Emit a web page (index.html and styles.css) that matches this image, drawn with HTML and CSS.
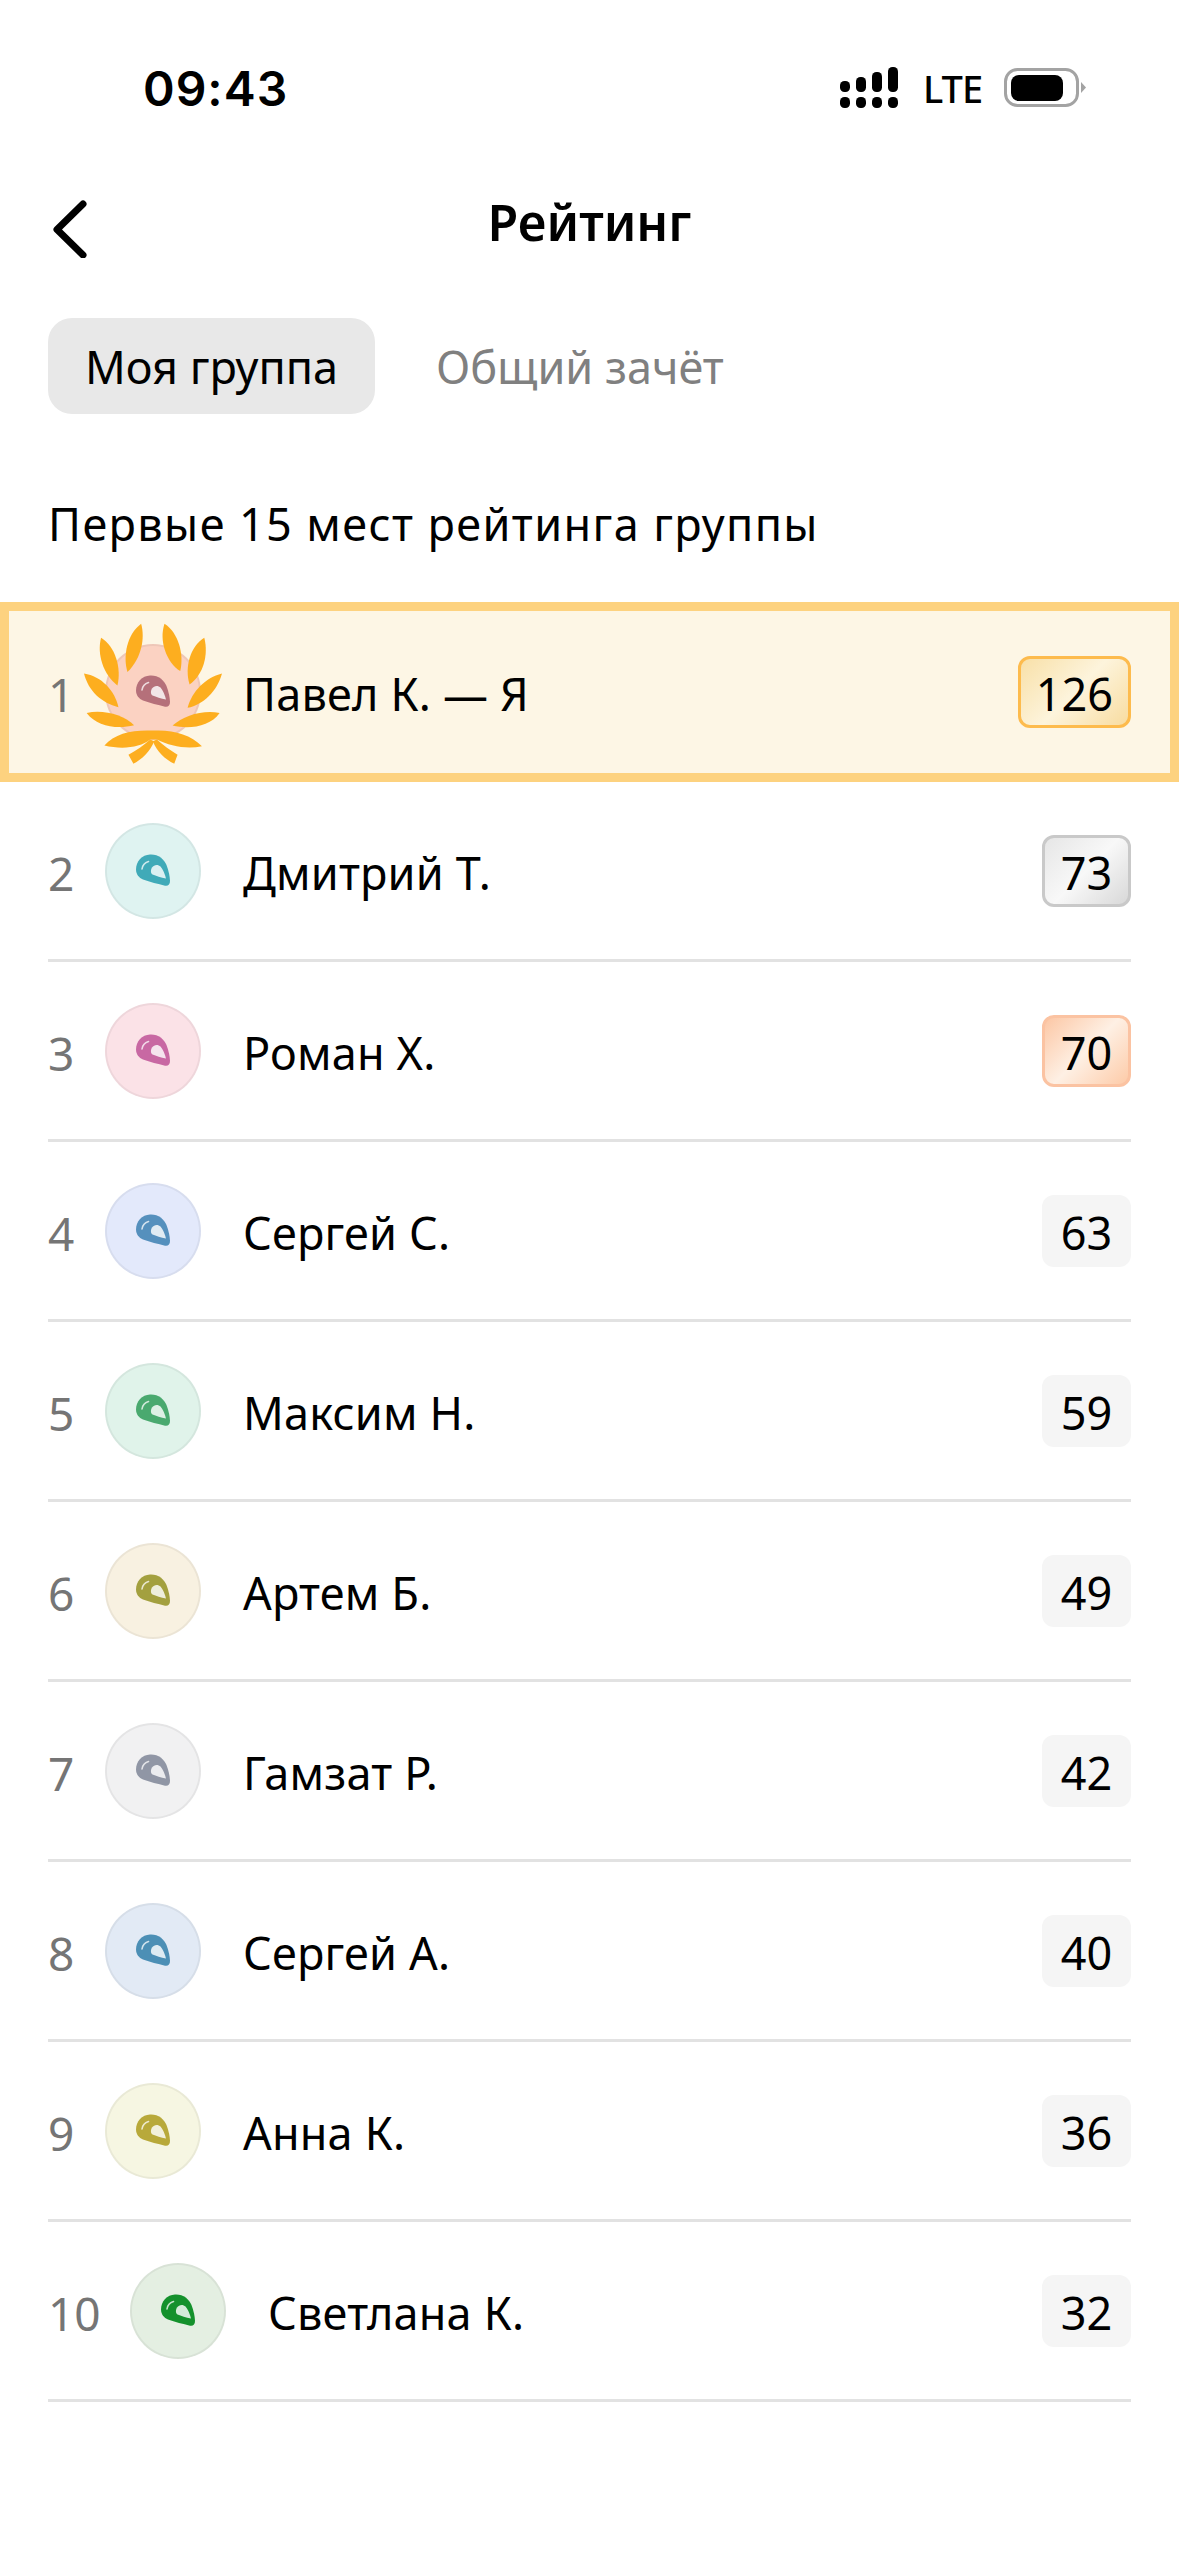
FILE: index.html
```html
<!DOCTYPE html>
<html lang="ru">
<head>
  <meta charset="UTF-8">
  <title>Рейтинг</title>
  <link rel="stylesheet" href="styles.css">
</head>
<body>
  <svg class="sprite" width="0" height="0">
    <symbol id="helmet" viewBox="0 0 34 32">
      <path fill="currentColor" d="M14 0.500C22 0 28 5 30.500 11C32.500 16 33.800 22 34 27C34 30.500 32 32.300 29 31.700C22 30 14 28 7 25.500C3 24 0 20 0 15.500C0 7 6 1 14 0.500Z"/>
      <path fill="#fff" fill-opacity="0.82" d="M16 13.500C18 10.500 22 10 24.500 12.500C27 15.500 29 20 30 24.500C25 23.500 20 22 16.500 20.500C14.500 19.500 14.500 16 16 13.500Z"/>
      <path fill="none" stroke="#fff" stroke-opacity="0.75" stroke-width="1.600" stroke-linecap="round" d="M6 15C6.500 11.500 9 8.500 12.500 7.500"/>
    </symbol>
  </svg>

  <div class="statusBar">
    <span class="clock">09:43</span>
    <div class="statusIcons">
      <svg class="signal" width="60" height="42" viewBox="0 0 60 42">
        <rect x="0" y="14" width="10" height="11" rx="4.500"/>
        <rect x="16" y="10" width="10" height="15" rx="4.500"/>
        <rect x="32" y="5" width="10" height="20" rx="4.500"/>
        <rect x="48" y="0" width="10" height="25" rx="4.500"/>
        <rect x="0" y="30" width="10" height="11" rx="4.500"/>
        <rect x="16" y="30" width="10" height="11" rx="4.500"/>
        <rect x="32" y="30" width="10" height="11" rx="4.500"/>
        <rect x="48" y="30" width="10" height="11" rx="4.500"/>
      </svg>
      <span class="network">LTE</span>
      <svg class="battery" width="82" height="40" viewBox="0 0 82 40">
        <rect x="1.500" y="1.500" width="72" height="36" rx="12" fill="none" stroke="#a3a3a3" stroke-width="3"/>
        <rect x="7" y="7" width="52" height="26" rx="8"/>
        <path fill="#a3a3a3" d="M77 14L82 19.500L77 25Z"/>
      </svg>
    </div>
  </div>

  <header class="navBar">
    <svg class="backIcon" width="40" height="60" viewBox="0 0 40 60">
      <path d="M33 6L7 31.500L33 57" fill="none" stroke="#000" stroke-width="7" stroke-linecap="round" stroke-linejoin="round"/>
    </svg>
    <h1 class="navTitle">Рейтинг</h1>
  </header>

  <div class="tabs">
    <div class="tab tabActive">Моя группа</div>
    <div class="tab">Общий зачёт</div>
  </div>

  <p class="caption">Первые 15 мест рейтинга группы</p>

  <div class="ratingList">
    <div class="ratingRow rowMe">
      <span class="place">1</span>
      <div class="avatar" style="--bg:#fbd2c2;--fg:#b5707a">
        <svg class="helmet" width="34" height="32"><use href="#helmet"/></svg>
        <!-- traced from the reference, 3x coords -->
        <svg class="wreath" width="147" height="147" viewBox="240 90 440 440">
          <g fill="#fdae1f">
            <path d="M423 98C435 140 425 200 382 243C368 195 380 130 423 98Z"/>
            <path d="M493 98C535 125 552 190 540 240C500 215 475 150 493 98Z"/>
            <path d="M303 140C345 165 365 230 352 283C310 250 290 190 303 140Z"/>
            <path d="M612 140C625 190 610 250 568 280C552 230 570 165 612 140Z"/>
            <path d="M252 247C305 255 345 300 355 348C305 335 265 300 252 247Z"/>
            <path d="M665 247C650 300 610 340 562 350C575 300 615 260 665 247Z"/>
            <path d="M260 365C310 355 370 370 402 402C350 415 290 405 260 365Z"/>
            <path d="M658 365C610 355 550 372 517 403C570 415 630 405 658 365Z"/>
            <path d="M313 463C345 425 400 415 460 418C520 415 570 430 605 465C560 475 510 465 470 445L450 445C420 470 365 475 313 463Z"/>
            <path d="M385 490C410 478 430 462 450 445L462 450C450 480 425 505 400 517Z"/>
            <path d="M532 490C510 478 490 462 470 445L458 450C470 480 495 505 522 517Z"/>
          </g>
        </svg>
      </div>
      <span class="name">Павел К. — Я</span>
      <span class="score scoreGold">126</span>
    </div>
    <div class="ratingRow">
      <span class="place">2</span>
      <div class="avatar" style="--bg:#dff3f1;--fg:#40aab8"><svg class="helmet" width="34" height="32"><use href="#helmet"/></svg></div>
      <span class="name">Дмитрий Т.</span>
      <span class="score scoreSilver">73</span>
    </div>
    <div class="ratingRow">
      <span class="place">3</span>
      <div class="avatar" style="--bg:#fbe2e7;--fg:#c868a3"><svg class="helmet" width="34" height="32"><use href="#helmet"/></svg></div>
      <span class="name">Роман Х.</span>
      <span class="score scoreBronze">70</span>
    </div>
    <div class="ratingRow">
      <span class="place">4</span>
      <div class="avatar" style="--bg:#e3e9fb;--fg:#5590bd"><svg class="helmet" width="34" height="32"><use href="#helmet"/></svg></div>
      <span class="name">Сергей С.</span>
      <span class="score">63</span>
    </div>
    <div class="ratingRow">
      <span class="place">5</span>
      <div class="avatar" style="--bg:#e0f3ea;--fg:#4aa96f"><svg class="helmet" width="34" height="32"><use href="#helmet"/></svg></div>
      <span class="name">Максим Н.</span>
      <span class="score">59</span>
    </div>
    <div class="ratingRow">
      <span class="place">6</span>
      <div class="avatar" style="--bg:#f8f1e1;--fg:#a3a03f"><svg class="helmet" width="34" height="32"><use href="#helmet"/></svg></div>
      <span class="name">Артем Б.</span>
      <span class="score">49</span>
    </div>
    <div class="ratingRow">
      <span class="place">7</span>
      <div class="avatar" style="--bg:#f1f1f2;--fg:#9096a5"><svg class="helmet" width="34" height="32"><use href="#helmet"/></svg></div>
      <span class="name">Гамзат Р.</span>
      <span class="score">42</span>
    </div>
    <div class="ratingRow">
      <span class="place">8</span>
      <div class="avatar" style="--bg:#e2eaf5;--fg:#4c8fb5"><svg class="helmet" width="34" height="32"><use href="#helmet"/></svg></div>
      <span class="name">Сергей А.</span>
      <span class="score">40</span>
    </div>
    <div class="ratingRow">
      <span class="place">9</span>
      <div class="avatar" style="--bg:#f6f6e2;--fg:#b8a93a"><svg class="helmet" width="34" height="32"><use href="#helmet"/></svg></div>
      <span class="name">Анна К.</span>
      <span class="score">36</span>
    </div>
    <div class="ratingRow rowWide">
      <span class="place">10</span>
      <div class="avatar" style="--bg:#e4efe2;--fg:#14912c"><svg class="helmet" width="34" height="32"><use href="#helmet"/></svg></div>
      <span class="name">Светлана К.</span>
      <span class="score">32</span>
    </div>
  </div>
</body>
</html>
```

FILE: styles.css
```css
* {
  box-sizing: border-box;
}
body {
  margin: 0;
  background: #fff;
  color: #000;
  font-family: "Noto Sans", "Open Sans", sans-serif;
}
.sprite {
  display: block;
}

/* status bar */
.statusBar {
  height: 172px;
  padding: 60px 93px 0 143px;
  display: flex;
  justify-content: space-between;
  align-items: flex-start;
}
.clock {
  margin-top: 1px;
  font-family: Inter, sans-serif;
  font-size: 48px;
  font-weight: 600;
  line-height: 56px;
  letter-spacing: 1px;
}
.statusIcons {
  display: flex;
  align-items: center;
  height: 56px;
  gap: 23px;
}
.network {
  width: 58px;
  font-size: 38px;
  font-weight: 500;
  line-height: 40px;
  letter-spacing: -1px;
  white-space: nowrap;
}

/* nav */
.navBar {
  position: relative;
  height: 100px;
  display: flex;
  align-items: center;
  justify-content: center;
}
.backIcon {
  position: absolute;
  left: 50px;
  top: 26px;
}
.navTitle {
  margin: 0;
  font-size: 50px;
  font-weight: 600;
  line-height: 60px;
}

/* tabs */
.tabs {
  display: flex;
  gap: 24px;
  padding: 46px 48px 0;
}
.tab {
  height: 96px;
  padding: 0 37px;
  border-radius: 24px;
  font-size: 45px;
  line-height: 98px;
  color: #808080;
}
.tabActive {
  background: #e8e8e8;
  color: #000;
}

.caption {
  margin: 0;
  padding: 81px 48px 0;
  height: 188px;
  font-size: 45px;
  line-height: 58px;
  letter-spacing: 1.4px;
}

/* list */
.ratingRow {
  height: 180px;
  margin: 0 48px;
  display: flex;
  align-items: center;
  border-bottom: 3px solid #e2e2e2;
}
.rowMe {
  position: relative;
  margin: 0;
  padding: 0 39px;
  background: #fdf6e5;
  border: 9px solid #fdd27f;
}
.place {
  width: 57px;
  flex: none;
  padding-top: 4px;
  font-size: 46px;
  color: #757575;
}
.rowWide .place {
  width: 82px;
}
.avatar {
  position: relative;
  flex: none;
  width: 96px;
  height: 96px;
  border-radius: 50%;
  background: var(--bg);
  color: var(--fg);
  box-shadow: inset 0 0 0 2px rgba(0, 0, 0, 0.05);
  display: flex;
  align-items: center;
  justify-content: center;
}
.helmet {
  margin-top: -2px;
}
.wreath {
  position: absolute;
  left: -25px;
  top: -23px;
}
.name {
  flex: 1;
  margin-left: 42px;
  padding-top: 4px;
  font-size: 45px;
  line-height: 60px;
  letter-spacing: 0.2px;
}
.score {
  flex: none;
  min-width: 89px;
  height: 72px;
  padding: 0 15px;
  border-radius: 12px;
  background: #f5f5f5;
  font-size: 45px;
  line-height: 76px;
  text-align: center;
}
.scoreGold,
.scoreSilver,
.scoreBronze {
  line-height: 70px;
  border: 3px solid;
}
.scoreGold {
  border-color: #fdbb4d;
  background: linear-gradient(135deg, #f8e0a8 0%, #fdf4dc 50%, #f8dca0 100%);
}
.scoreSilver {
  border-color: #c9c9c9;
  background: linear-gradient(135deg, #e6e6e6 0%, #f8f8f8 50%, #d8d8d8 100%);
}
.scoreBronze {
  border-color: #fbc3a2;
  background: linear-gradient(135deg, #fcc7a5 0%, #fef0e4 50%, #fdcba8 100%);
}
```
